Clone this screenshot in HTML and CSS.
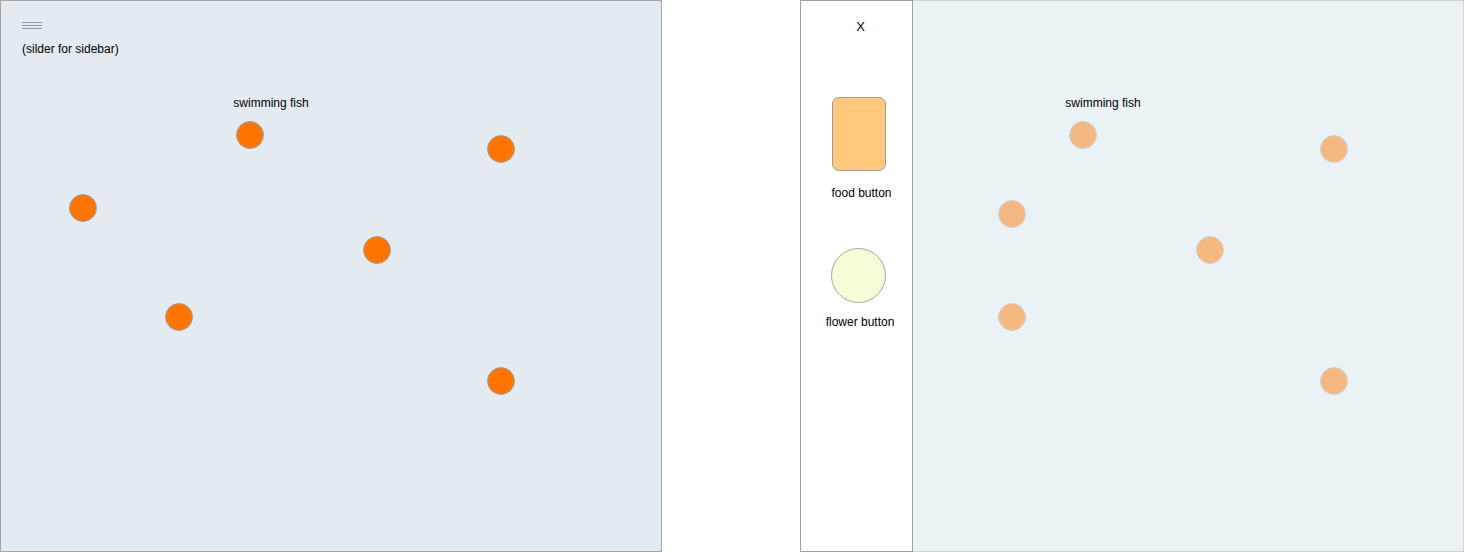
FILE: index.html
```html
<!DOCTYPE html>
<html>
<head>
<meta charset="utf-8">
<link rel="stylesheet" href="styles.css">
</head>
<body>
<div class="page">
  <section class="tank tank-main">
    <div class="menu-icon"><span></span><span></span><span></span></div>
    <div class="slider-label">(silder for sidebar)</div>
    <div class="tank-label" style="left:210px;top:95px">swimming fish</div>
    <div class="fish" style="left:235px;top:120px"></div>
    <div class="fish" style="left:486px;top:134px"></div>
    <div class="fish" style="left:68px;top:193px"></div>
    <div class="fish" style="left:362px;top:235px"></div>
    <div class="fish" style="left:164px;top:302px"></div>
    <div class="fish" style="left:486px;top:366px"></div>
  </section>
  <div class="spacer"></div>
  <aside class="sidebar">
    <div class="close">X</div>
    <div class="food-btn"></div>
    <div class="btn-label food-label">food button</div>
    <div class="flower-btn"></div>
    <div class="btn-label flower-label">flower button</div>
  </aside>
  <section class="tank tank-dim">
    <div class="tank-label" style="left:130px;top:95px">swimming fish</div>
    <div class="fish fish-dim" style="left:156px;top:120px"></div>
    <div class="fish fish-dim" style="left:407px;top:134px"></div>
    <div class="fish fish-dim" style="left:85px;top:199px"></div>
    <div class="fish fish-dim" style="left:283px;top:235px"></div>
    <div class="fish fish-dim" style="left:85px;top:302px"></div>
    <div class="fish fish-dim" style="left:407px;top:366px"></div>
  </section>
</div>
</body>
</html>
```
FILE: styles.css
```css
html, body {
  margin: 0;
  padding: 0;
  background: #ffffff;
}
body {
  font-family: "Liberation Sans", Arial, Helvetica, sans-serif;
  font-size: 12px;
  color: #000;
}
.page {
  display: flex;
  width: 1464px;
  height: 552px;
}
.tank {
  position: relative;
  box-sizing: border-box;
  height: 552px;
}
.tank-main {
  width: 662px;
  background: #e3ebf1;
  border: 1px solid #a3a3a3;
  padding: 20px 21px;
}
.spacer {
  width: 138px;
  flex: none;
}
.menu-icon {
  display: flex;
  flex-direction: column;
  gap: 2px;
  width: 20px;
  margin-top: 1px;
}
.menu-icon span {
  display: block;
  height: 1px;
  background: #9a9a9a;
}
.slider-label {
  margin-top: 13px;
  line-height: 14px;
}
.tank-label {
  position: absolute;
  width: 120px;
  text-align: center;
  line-height: 14px;
}
.fish {
  position: absolute;
  box-sizing: border-box;
  width: 28px;
  height: 28px;
  border-radius: 50%;
  background: #ff7500;
  border: 1px solid #9aa3aa;
}
.fish-dim {
  background: #f4b880;
  border-color: #cdd3d8;
}
.sidebar {
  box-sizing: border-box;
  width: 113px;
  height: 552px;
  flex: none;
  background: #fff;
  border: 1px solid #a0a0a0;
  display: flex;
  flex-direction: column;
  align-items: center;
  padding: 19px 0 0 6px;
}
.close {
  line-height: 14px;
  font-size: 13px;
  margin-left: 2px;
}
.food-btn {
  box-sizing: border-box;
  width: 54px;
  height: 74px;
  margin-top: 63px;
  margin-right: 1px;
  background: #ffc87c;
  border: 1px solid #9a9a9a;
  border-radius: 7px;
}
.btn-label {
  line-height: 14px;
}
.food-label {
  margin-top: 15px;
  margin-left: 4px;
}
.flower-btn {
  box-sizing: border-box;
  width: 55px;
  height: 55px;
  margin-top: 48px;
  margin-right: 2px;
  border-radius: 50%;
  background: #f5fdd8;
  border: 1px solid #a8a8a0;
}
.btn-label.flower-label {
  margin-top: 12px;
  margin-left: 1px;
}
.tank-dim {
  flex: 1;
  background: #eaf2f6;
  border: 1px solid #d0d3d6;
  border-left: none;
}
```
